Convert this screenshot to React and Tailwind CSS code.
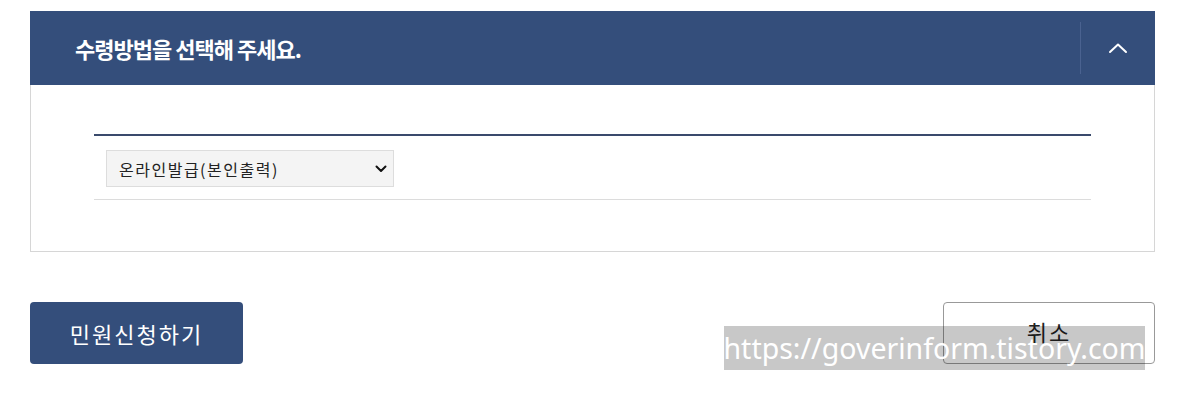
export default function App() {
  const ko = { fontFamily: '"Noto Sans CJK KR", "Noto Sans", sans-serif' };
  return (
    <div className="relative w-[1185px] h-[411px] bg-white" style={ko}>
      <div className="pt-[11px] px-[30px]">
        <div className="flex items-center h-[74px] bg-[#344e7b]">
          <div className="flex-1 pl-[45px] text-white text-[22px] font-bold tracking-[-1px] leading-none">
            수령방법을 선택해 주세요.
          </div>
          <div className="w-px h-[52px] bg-[#4a6290]" />
          <div className="w-[74px] flex items-center justify-center">
            <svg width="20" height="12" viewBox="0 0 20 12" fill="none">
              <path d="M2 10 L10 2.5 L18 10" stroke="white" strokeWidth="2" strokeLinecap="round" strokeLinejoin="round" />
            </svg>
          </div>
        </div>
        <div className="border border-t-0 border-[#d6d6d6] h-[167px] px-[63px] pt-[49px]">
          <div className="border-t-2 border-[#3a4a6c] border-b border-b-[#dcdcdc] px-[12px] pt-[14px] pb-[12px]">
            <div className="w-[288px] h-[37px] bg-[#f4f4f4] border border-[#dddddd] flex items-center justify-between pl-[12px] pr-[6px] text-[16px] tracking-[1.5px] text-[#222]">
              <span>온라인발급(본인출력)</span>
              <svg width="12" height="8" viewBox="0 0 12 8" fill="none">
                <path d="M1.5 1.5 L6 6 L10.5 1.5" stroke="#111" strokeWidth="2" strokeLinecap="round" strokeLinejoin="round" />
              </svg>
            </div>
          </div>
        </div>
        <div className="flex justify-between mt-[50px]">
          <div className="w-[213px] h-[62px] rounded-[4px] bg-[#344e7b] text-white text-[22px] tracking-[2px] flex items-center justify-center">
            민원신청하기
          </div>
          <div className="w-[212px] h-[62px] rounded-[4px] border border-[#999] text-[#222] text-[22px] tracking-[2px] flex items-center justify-center pb-[4px] bg-white">
            취소
          </div>
        </div>
      </div>
      <div className="absolute left-[724px] top-[326px] w-[421px] h-[44px] bg-black/[0.215] flex items-center justify-center text-white text-[28.5px] whitespace-nowrap" style={{ fontFamily: '"Noto Sans", sans-serif' }}>
        https://goverinform.tistory.com
      </div>
    </div>
  );
}
